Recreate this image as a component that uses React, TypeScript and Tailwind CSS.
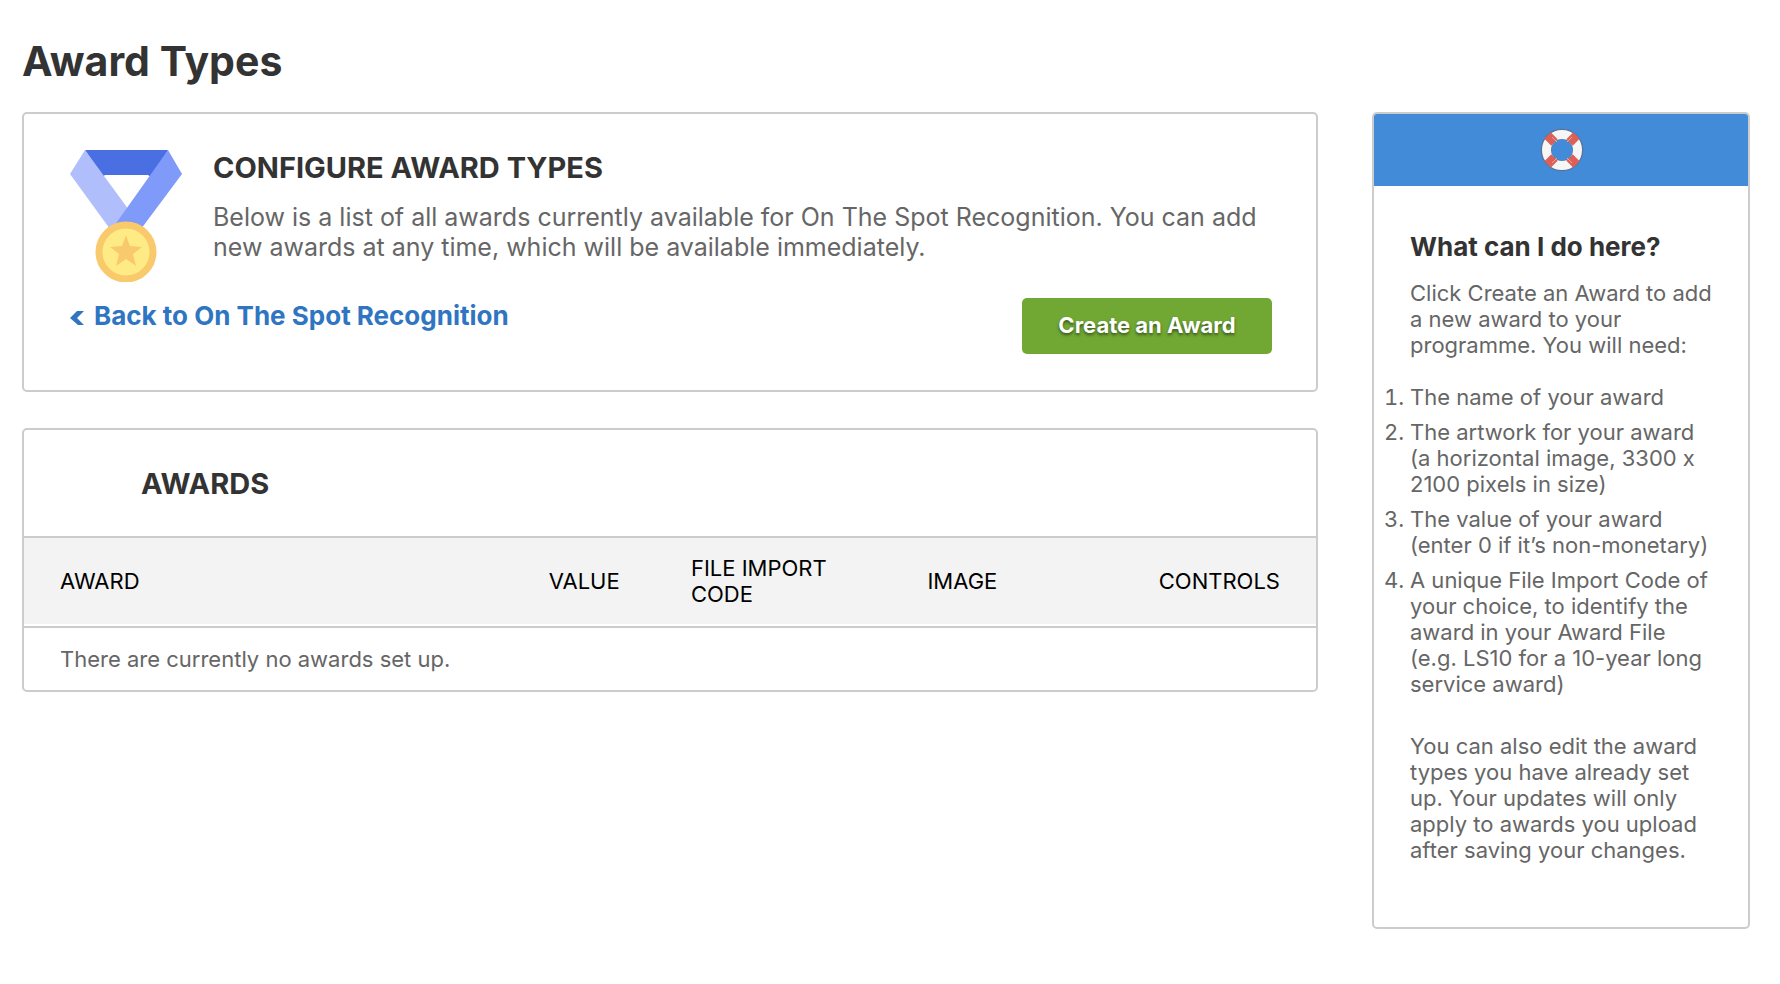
function MedalIcon() {
  return (
    <svg viewBox="0 0 112 132" className="h-[132px] w-[112px] shrink-0" aria-hidden="true">
      <path d="M15 0H98L83 26H32Z" fill="#4a6fe3" />
      <path d="M34 25H79L56 57Z" fill="#fff" />
      <path d="M15 0L0 24L40 79L57 76L64 66L56 56Z" fill="#b0bffc" />
      <path d="M98 0L112 24L71 79H42Z" fill="#7f9af9" />
      <circle cx="56" cy="102" r="27" fill="#ffeb85" stroke="#f8ca6c" strokeWidth="7" />
      <path
        d="M56 85L60 96L72 97L63 104L66 116L56 109L46 116L49 104L40 97L52 96Z"
        fill="#f8ca6c"
      />
    </svg>
  )
}

function LifebuoyIcon() {
  return (
    <svg viewBox="0 0 88 88" className="ml-0.5 h-11 w-11" aria-hidden="true">
      <circle cx="44" cy="44" r="32" fill="none" stroke="#5b7096" strokeWidth="21" />
      <circle cx="44" cy="44" r="31" fill="none" stroke="#f6f6f6" strokeWidth="18" />
      <g stroke="#dc6057" strokeWidth="18">
        <path d="M15 15L29 29" />
        <path d="M73 15L59 29" />
        <path d="M15 73L29 59" />
        <path d="M73 73L59 59" />
      </g>
      <g stroke="#eba29b" strokeWidth="2">
        <path d="M24 18L34 28" />
        <path d="M64 18L54 28" />
        <path d="M24 70L34 60" />
        <path d="M64 70L54 60" />
      </g>
    </svg>
  )
}

function ConfigurePanel() {
  return (
    <section className="rounded-[5px] border-2 border-[#ccc] py-9 pr-11 pl-[46px]">
      <div className="flex gap-[31px]">
        <MedalIcon />
        <div>
          <h2 className="text-[29px] leading-9 font-bold text-[#333] uppercase">
            Configure Award Types
          </h2>
          <p className="mt-4 text-[25px] leading-[30px]">
            Below is a list of all awards currently available for On The Spot Recognition. You can
            add new awards at any time, which will be available immediately.
          </p>
        </div>
      </div>
      <div className="mt-4 flex items-start justify-between">
        <a
          href="#recognition"
          className="flex items-center gap-2.5 text-[26px] leading-9 font-bold text-[#2f75c1]"
        >
          <svg viewBox="0 0 14 14" className="mt-1 h-3.5 w-3.5" aria-hidden="true">
            <path d="M0 7L7 0H14L7 7L14 14H8Z" fill="currentColor" />
          </svg>
          Back to On The Spot Recognition
        </a>
        <button
          type="button"
          className="h-14 w-[250px] rounded-[5px] bg-[#70a833] pb-0.5 text-[22px] font-bold text-white [text-shadow:0_2px_3px_rgba(0,0,0,0.5)]"
        >
          Create an Award
        </button>
      </div>
    </section>
  )
}

function AwardsPanel() {
  return (
    <section className="mt-9 rounded-[5px] border-2 border-[#ccc]">
      <h2 className="pt-9 pb-[34px] pl-[117px] text-[29px] leading-9 font-bold text-[#333] uppercase">
        Awards
      </h2>
      <table className="w-full table-fixed border-separate border-spacing-0 border-t-2 border-[#ccc] text-left text-[22px] leading-[26px]">
        <thead className="text-black uppercase">
          <tr>
            <th className="w-[40%] border-b-2 border-white bg-[#f3f3f3] bg-clip-padding pl-9 font-normal">
              Award
            </th>
            <th className="w-[11%] border-b-2 border-white bg-[#f3f3f3] bg-clip-padding pl-2 font-normal">
              Value
            </th>
            <th className="w-[18%] border-b-2 border-white bg-[#f3f3f3] bg-clip-padding py-[17px] pr-16 pl-2 font-normal">
              File Import Code
            </th>
            <th className="border-b-2 border-white bg-[#f3f3f3] bg-clip-padding pl-3 font-normal">
              Image
            </th>
            <th className="border-b-2 border-white bg-[#f3f3f3] bg-clip-padding pr-9 text-right font-normal">
              Controls
            </th>
          </tr>
        </thead>
        <tbody>
          <tr>
            <td colSpan={5} className="border-t-2 border-[#ccc] px-9 py-[18px]">
              There are currently no awards set up.
            </td>
          </tr>
        </tbody>
      </table>
    </section>
  )
}

function HelpPanel() {
  return (
    <aside className="w-[378px] shrink-0 overflow-hidden rounded-[5px] border-2 border-[#ccc]">
      <div className="flex h-[72px] items-center justify-center bg-[#428bd8]">
        <LifebuoyIcon />
      </div>
      <div className="pt-[46px] pr-7 pb-16 pl-9 text-[22px] leading-[26px]">
        <h3 className="text-[26px] leading-[30px] font-bold text-[#333]">What can I do here?</h3>
        <p className="mt-[18px]">
          Click Create an Award to add a new award to your programme. You will need:
        </p>
        <ol className="mt-[26px] flex list-decimal flex-col gap-[9px]">
          <li>The name of your award</li>
          <li>
            The artwork for your award
            <br />
            (a horizontal image, 3300 x 2100 pixels in size)
          </li>
          <li>
            The value of your award
            <br />
            (enter 0 if it’s non-monetary)
          </li>
          <li>
            A unique File Import Code of your choice, to identify the award in your Award File
            <br />
            (e.g. LS10 for a 10-year long service award)
          </li>
        </ol>
        <p className="mt-9">
          You can also edit the award types you have already set up. Your updates will only apply to
          awards you upload after saving your changes.
        </p>
      </div>
    </aside>
  )
}

export default function App() {
  return (
    <div className="min-h-screen bg-white pt-9 pr-[30px] pb-14 pl-[22px] font-[Inter,sans-serif] text-[#666] [font-feature-settings:'calt'_0]">
      <h1 className="text-[41px] leading-[50px] font-bold text-[#333]">Award Types</h1>
      <div className="mt-[26px] flex items-start gap-[54px]">
        <main className="min-w-0 flex-1">
          <ConfigurePanel />
          <AwardsPanel />
        </main>
        <HelpPanel />
      </div>
    </div>
  )
}
